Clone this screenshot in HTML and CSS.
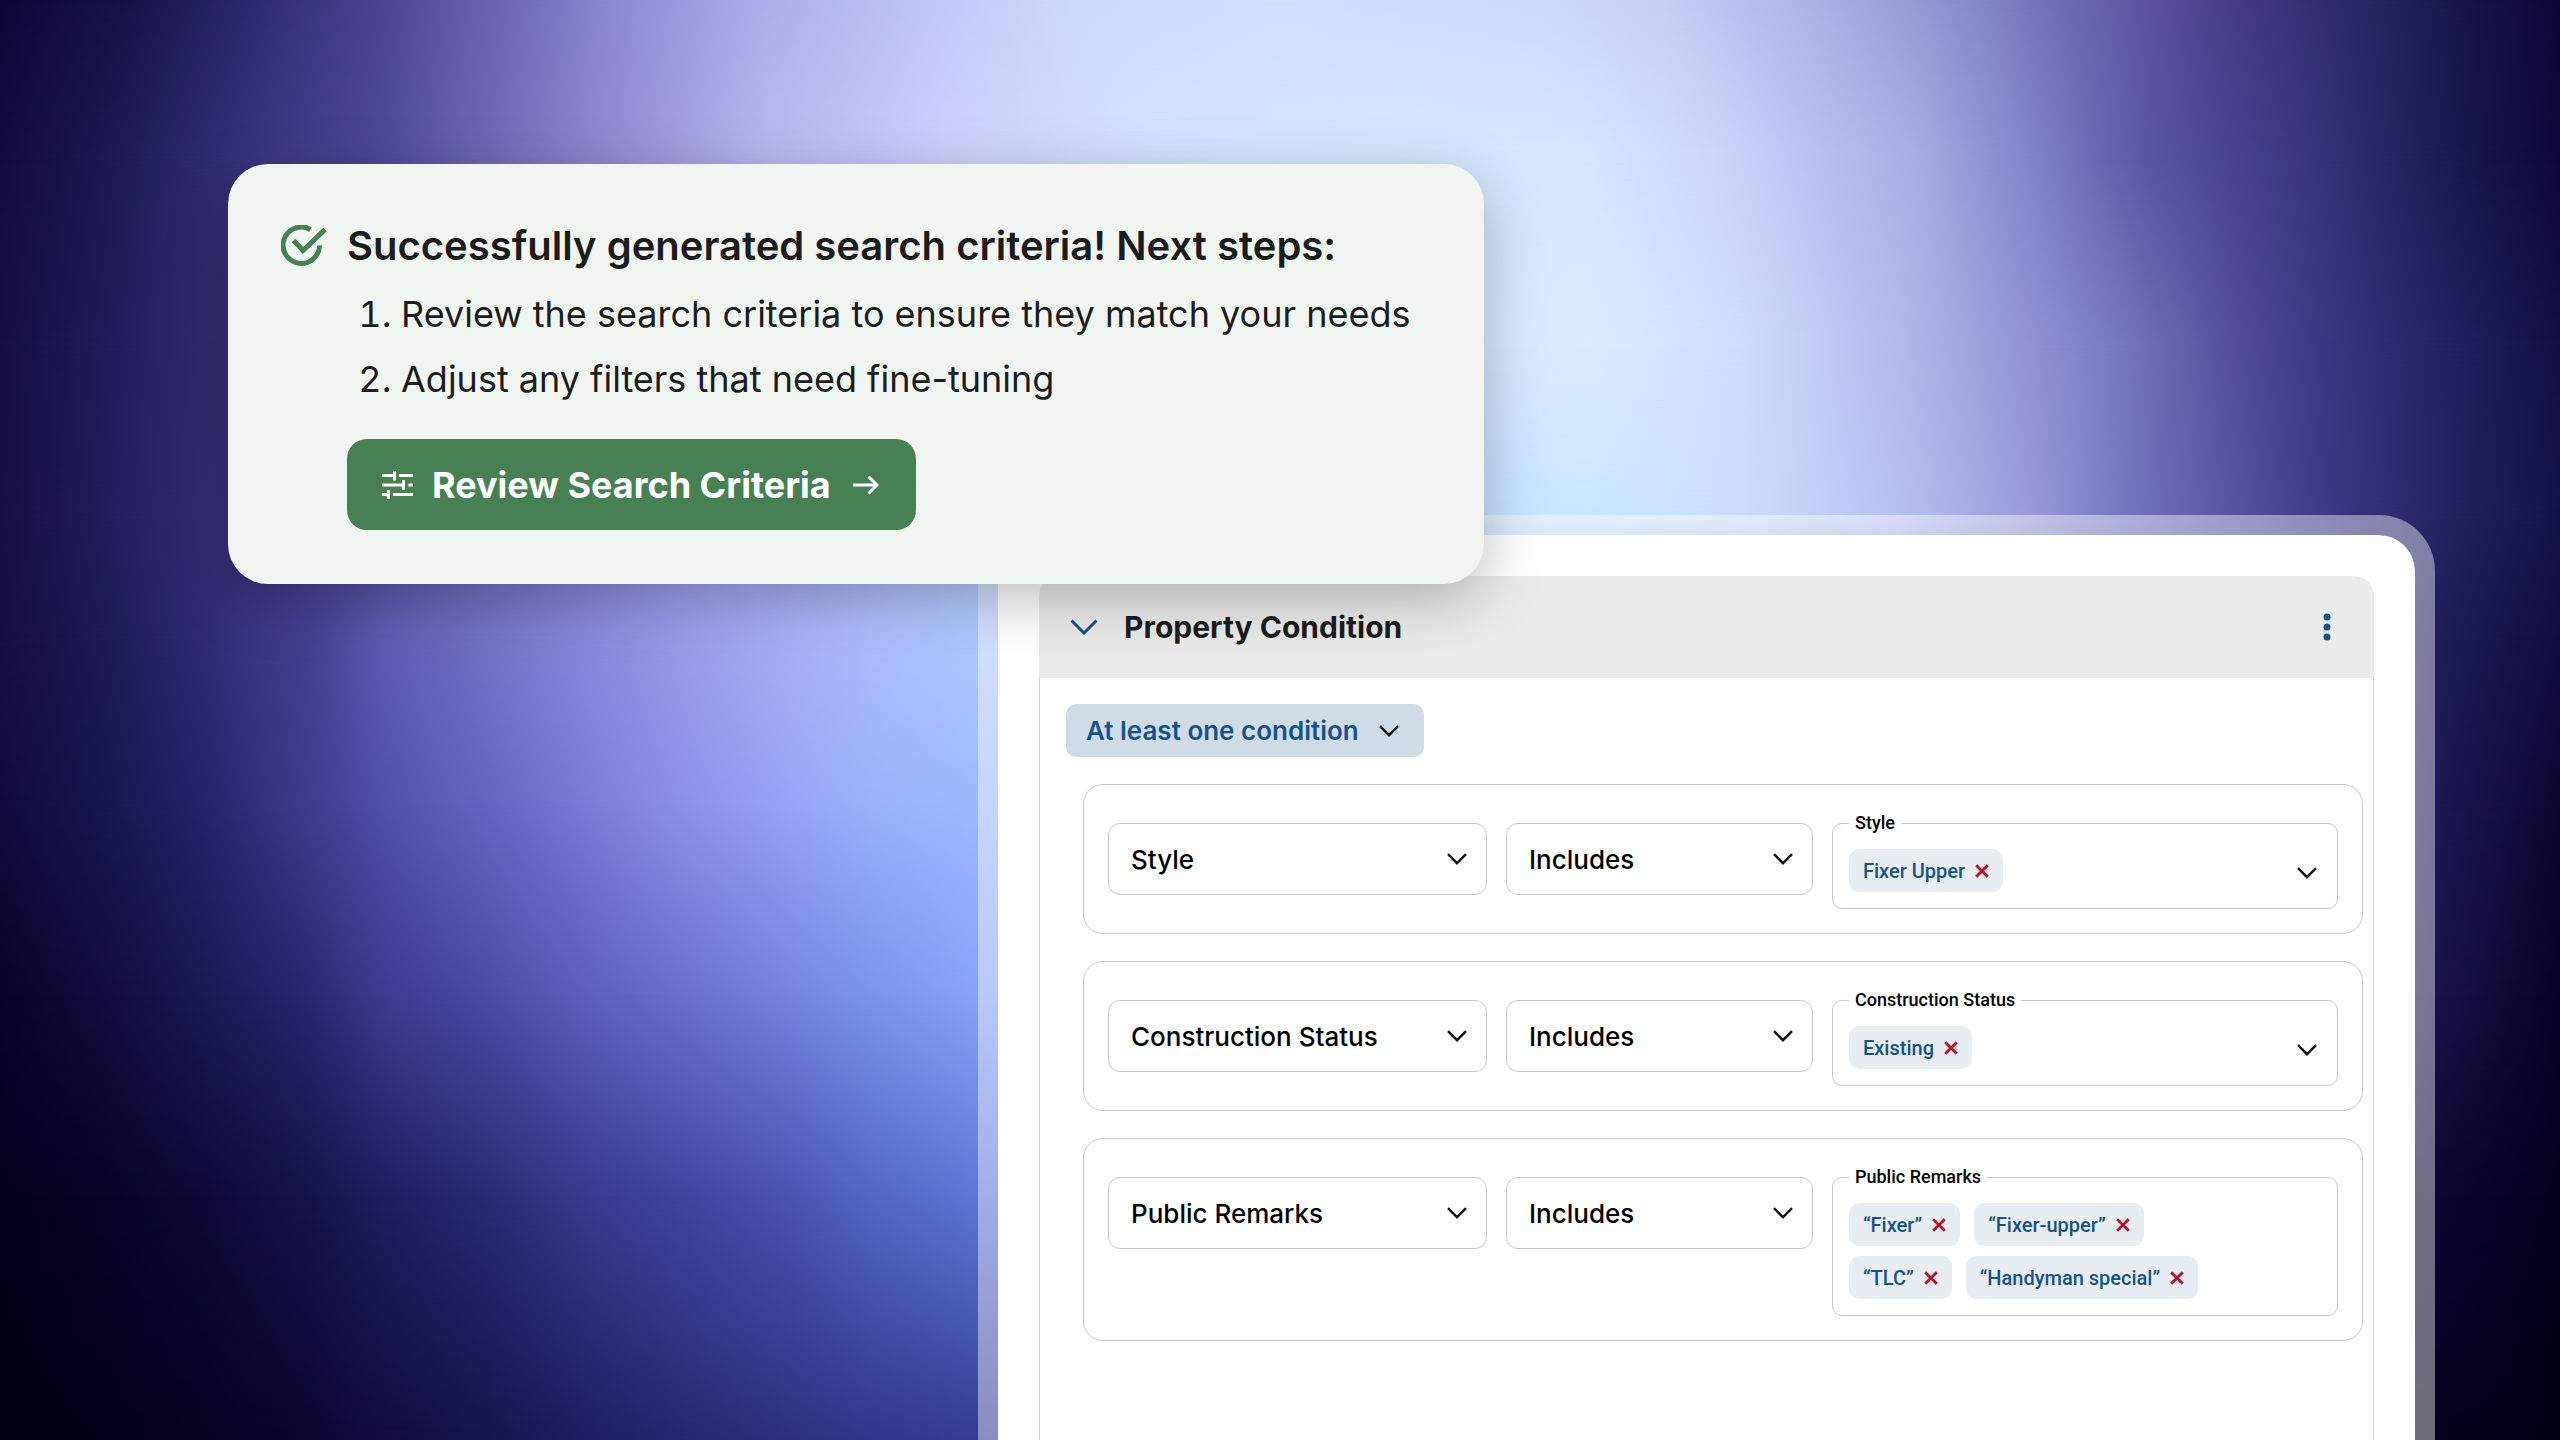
FILE: index.html
```html
<!DOCTYPE html>
<html lang="en">
<head>
<meta charset="utf-8">
<meta name="viewport" content="width=device-width, initial-scale=1">
<title>Search criteria</title>
<link rel="stylesheet" href="styles.css">
</head>
<body>
<svg class="sprite" aria-hidden="true">
  <symbol id="chevron" viewBox="0 0 20 12"><path d="M1 1.2l9 9 9-9" fill="none" stroke="currentColor" stroke-width="2.4"/></symbol>
  <symbol id="cross" viewBox="0 0 14 14"><path d="M1.2 1.2l11.6 11.6M12.8 1.2L1.2 12.8" fill="none" stroke="currentColor" stroke-width="2.8"/></symbol>
</svg>
<div class="backdrop" aria-hidden="true">
  <div class="glow glow-1"></div>
  <div class="glow glow-2"></div>
  <div class="glow glow-3"></div>
  <div class="glow glow-4"></div>
  <div class="glow glow-5"></div>
  <div class="glow glow-6"></div>
  <div class="glow glow-7"></div>
  <div class="glow glow-8"></div>
  <div class="glow glow-9"></div>
</div>
<main class="stage">
  <section class="notice">
    <svg class="notice-icon" viewBox="0 0 46 42" aria-hidden="true" fill="none" stroke="#478153" stroke-width="5">
      <path d="M29.500 4.500A18.200 18.200 0 1 0 38.500 20.500"/>
      <path d="M12.500 15.500L22 25.500L44 4.500"/>
    </svg>
    <div class="notice-body">
      <h1>Successfully generated search criteria! Next steps:</h1>
      <ol>
        <li>Review the search criteria to ensure they match your needs</li>
        <li>Adjust any filters that need fine-tuning</li>
      </ol>
      <button class="review" type="button">
        <svg class="tune" viewBox="0 0 31 28" aria-hidden="true" fill="none" stroke="currentColor" stroke-width="3">
          <path d="M0 4.500H14M17 4.500H31M12.500 0V9.500M0 14H23M26.500 14H31M21.500 9V19M0 23.500H8M11 23.500H31M6.500 19V28"/>
        </svg>
        <span>Review Search Criteria</span>
        <svg class="arrow" viewBox="0 0 26 20" aria-hidden="true" fill="none" stroke="currentColor" stroke-width="3">
          <path d="M0 10H23M15.500 1.500L24 10L15.500 18.500"/>
        </svg>
      </button>
    </div>
  </section>

  <section class="panel">
    <div class="group">
      <header class="group-head">
        <button class="toggle" type="button" aria-label="Collapse"><svg viewBox="0 0 28 16"><path d="M1.500 1.500L14 14L26.500 1.500" fill="none" stroke="currentColor" stroke-width="3"/></svg></button>
        <h2>Property Condition</h2>
        <button class="more" type="button" aria-label="More"><svg viewBox="0 0 8 28" fill="currentColor"><circle cx="4" cy="4" r="3.500"/><circle cx="4" cy="14" r="3.500"/><circle cx="4" cy="24" r="3.500"/></svg></button>
      </header>
      <div class="group-body">
        <button class="mode" type="button">At least one condition <svg class="chev"><use href="#chevron"/></svg></button>
        <div class="rules">
          <div class="rule">
            <div class="pick"><select aria-label="Field"><option>Style</option></select><svg class="chev"><use href="#chevron"/></svg></div>
            <div class="pick"><select aria-label="Operator"><option>Includes</option></select><svg class="chev"><use href="#chevron"/></svg></div>
            <fieldset><legend>Style</legend>
              <div class="tags"><span class="tag">Fixer Upper<button type="button" aria-label="Remove"><svg><use href="#cross"/></svg></button></span></div>
              <svg class="chev"><use href="#chevron"/></svg>
            </fieldset>
          </div>
          <div class="rule">
            <div class="pick"><select aria-label="Field"><option>Construction Status</option></select><svg class="chev"><use href="#chevron"/></svg></div>
            <div class="pick"><select aria-label="Operator"><option>Includes</option></select><svg class="chev"><use href="#chevron"/></svg></div>
            <fieldset><legend>Construction Status</legend>
              <div class="tags"><span class="tag">Existing<button type="button" aria-label="Remove"><svg><use href="#cross"/></svg></button></span></div>
              <svg class="chev"><use href="#chevron"/></svg>
            </fieldset>
          </div>
          <div class="rule">
            <div class="pick"><select aria-label="Field"><option>Public Remarks</option></select><svg class="chev"><use href="#chevron"/></svg></div>
            <div class="pick"><select aria-label="Operator"><option>Includes</option></select><svg class="chev"><use href="#chevron"/></svg></div>
            <fieldset><legend>Public Remarks</legend>
              <div class="tags">
                <span class="tag">“Fixer”<button type="button" aria-label="Remove"><svg><use href="#cross"/></svg></button></span>
                <span class="tag">“Fixer-upper”<button type="button" aria-label="Remove"><svg><use href="#cross"/></svg></button></span>
                <span class="tag">“TLC”<button type="button" aria-label="Remove"><svg><use href="#cross"/></svg></button></span>
                <span class="tag">“Handyman special”<button type="button" aria-label="Remove"><svg><use href="#cross"/></svg></button></span>
              </div>
            </fieldset>
          </div>
        </div>
      </div>
    </div>
  </section>
</main>
</body>
</html>
```

FILE: styles.css
```css
* { box-sizing: border-box; }
html, body { height: 100%; }
body {
  margin: 0;
  overflow: hidden;
  font-family: Inter, "Liberation Sans", sans-serif;
  color: #1c1c1c;
  background: #03021c;
}
button { font: inherit; color: inherit; border: 0; background: none; padding: 0; }
svg { display: block; }
.sprite { position: absolute; width: 0; height: 0; }

/* The glow is a stack of horizontal ramps, each fading in below the one before. */
.backdrop { position: absolute; inset: 0; }
.glow { position: absolute; inset: 0; }
.glow-1 { background: linear-gradient(90deg, #0b0735 0%, #16134a 5%, #2e2a70 10%, #4c4594 15%, #706ab8 20%, #9490d8 25%, #aeaeec 30%, #c4c8f8 37%, #cddafa 42%, #d0dffc 50%, #cddafa 60%, #c6cef5 65%, #b2b6ea 70%, #959ad6 75%, #7370b6 80%, #5a52a0 84%, #3f3880 88%, #2b2868 92%, #18164c 96%, #0b0735 100%); }
.glow-2 { background: linear-gradient(90deg, #100c3f 0%, #1b1852 4%, #2f2b70 8%, #504a9c 15%, #7670bc 20%, #9a94d8 25%, #b8b8f0 30%, #ced0fc 37%, #d4e2fd 45%, #d8e6fe 55%, #d6e6fe 62%, #ccd6fa 67%, #bfc6f4 70%, #a8abe4 75%, #7c7cc4 80%, #5a55a2 84%, #453f8c 88%, #2f2c6e 92%, #191850 96%, #0c0838 100%); mask-image: linear-gradient(transparent 0%, #000 11%); }
.glow-3 { background: linear-gradient(90deg, #130f44 0%, #1f1b5a 4%, #353074 9%, #7670bc 19%, #aaa8ea 27%, #ced8ff 40%, #dcecff 62%, #cfdcfb 68%, #b4bbec 74%, #9494d6 79%, #7676bc 83%, #56509c 87%, #3a3580 91%, #222060 96%, #120f45 100%); mask-image: linear-gradient(transparent 11%, #000 24%); }
.glow-4 { background: linear-gradient(90deg, #140f44 0%, #211d5d 4%, #373179 9%, #6a64b8 17%, #a4a2ee 27%, #b8d0ff 38%, #cae6ff 62%, #ccdcfc 68%, #b8c2f2 74%, #9c9cdc 79%, #7676c0 83%, #5a56a2 87%, #3c3884 91%, #22215e 96%, #14124a 100%); mask-image: linear-gradient(transparent 24%, #000 36%); }
.glow-5 { background: linear-gradient(90deg, #130f42 0%, #1d1a56 4%, #302b74 8%, #453f92 12%, #5f5bb2 15%, #7573c6 19%, #8a88dc 23%, #9c9eec 27%, #a8b0f6 31%, #aebcfc 34%, #b0c8ff 38%, #3c3884 91%, #201e5c 95%, #100d40 100%); mask-image: linear-gradient(transparent 36%, #000 44%); }
.glow-6 { background: linear-gradient(90deg, #0f0b3c 0%, #171550 4%, #26236a 8%, #403a8e 12%, #524fa8 15%, #6664c0 19%, #7c7ad6 23%, #8e92e8 27%, #98a4f6 31%, #9ab0fa 34%, #9cb8ff 38%, #3c3884 90%, #1c1858 95%, #0a0730 100%); mask-image: linear-gradient(transparent 44%, #000 56%); }
.glow-7 { background: linear-gradient(90deg, #070528 0%, #100c3e 4%, #1b1956 8%, #2a2670 12%, #3f3a90 15%, #4c4aa4 19%, #5e60bc 23%, #6a72ce 27%, #7684e0 31%, #7c94ea 34%, #86a4f8 38%, #302b74 90%, #17134c 95%, #060424 100%); mask-image: linear-gradient(transparent 56%, #000 69%); }
.glow-8 { background: linear-gradient(90deg, #02011c 0%, #060524 4%, #0c0938 8%, #15134a 12%, #1f1e60 15%, #2a2a74 19%, #383a8e 23%, #4146a0 27%, #4c54b2 31%, #5466c4 34%, #5e76d4 38%, #17134c 90%, #0a0830 95%, #02011c 100%); mask-image: linear-gradient(transparent 69%, #000 83%); }
.glow-9 { background: linear-gradient(90deg, #000015 0%, #01001a 4%, #05041f 8%, #090630 12%, #100c40 15%, #16144e 19%, #1f1e62 23%, #262872 27%, #2c307e 31%, #303688 34%, #343c90 38%, #05041f 90%, #03021c 95%, #000015 100%); mask-image: linear-gradient(transparent 83%, #000 100%); }

.stage {
  position: relative;
  min-height: 100%;
  display: grid;
  grid-template-columns: 228fr 750fr 506fr 951fr 125fr;
  grid-template-rows: 164px 351px 69px auto;
}

.notice {
  grid-column: 2 / 4;
  grid-row: 2 / 4;
  z-index: 1;
  display: flex;
  gap: 20px;
  padding: 56px 53px 53px;
  border-radius: 40px;
  background: #f1f5f1;
  box-shadow: 0 16px 60px rgba(0, 0, 0, .26);
}
.notice-icon { width: 46px; height: 42px; margin-top: 5px; flex: none; }
.notice h1 { margin: 0; font-size: 40px; line-height: 52px; font-weight: 600; white-space: nowrap; }
.notice ol { margin: 10px 0 27px; padding-left: 54px; font-size: 36px; line-height: 65px; white-space: nowrap; }
.review {
  display: flex;
  align-items: center;
  height: 91px;
  padding: 0 37px 0 35px;
  border-radius: 20px;
  background: #478153;
  color: #fff;
  font-size: 36px;
  font-weight: 700;
}
.tune { width: 31px; height: 28px; margin-right: 19px; }
.arrow { width: 26px; height: 20px; margin-left: 22px; }

.panel {
  grid-column: 3 / 5;
  grid-row: 3 / 5;
  border: 20px solid rgba(255, 255, 255, .42);
  border-bottom: 0;
  border-radius: 56px 56px 0 0;
  background: #fff;
  background-clip: padding-box;
  padding: 41px 41px 0;
  display: flex;
}
.group { flex: 1; display: flex; flex-direction: column; }
.group-head {
  display: flex;
  align-items: center;
  height: 102px;
  padding: 0 43px 0 31px;
  border-radius: 20px 20px 0 0;
  background: #ebebeb;
}
.toggle { color: #175387; margin-right: 26px; }
.toggle svg { width: 28px; height: 16px; }
.more { color: #175387; margin-left: auto; }
.more svg { width: 8px; height: 28px; }
.group h2 { margin: 0; font-size: 30px; line-height: 40px; font-weight: 700; }
.group-body { flex: 1; padding: 26px 10px 0 26px; border: solid #d6d6d6; border-width: 0 1px; background: #fff; }
.mode {
  display: flex;
  align-items: center;
  gap: 20px;
  height: 53px;
  padding: 0 25px 0 20px;
  border-radius: 10px;
  background: #cfdce6;
  color: #175387;
  font-size: 26px;
  font-weight: 600;
}
.chev { width: 20px; height: 12px; flex: none; color: #111; }
.rules { display: grid; gap: 27px; margin: 27px 0 0 17px; }
.rule {
  display: grid;
  grid-template-columns: 379fr 307fr 506fr;
  align-items: start;
  gap: 19px;
  padding: 38px 24px 24px;
  border: 1px solid #c8c8c8;
  border-radius: 20px;
}
.pick { display: grid; align-items: center; }
.pick > * { grid-area: 1 / 1; }
.pick .chev { justify-self: end; margin-right: 20px; pointer-events: none; }
.pick select {
  appearance: none;
  width: 100%;
  height: 72px;
  padding: 0 22px;
  border: 1px solid #c8c8c8;
  border-radius: 12px;
  background: #fff;
  color: #000;
  font: 500 26px Inter, "Liberation Sans", sans-serif;
}
fieldset {
  display: flex;
  align-items: center;
  justify-content: space-between;
  min-width: 0;
  margin: -11px 0 0;
  padding: 15px 20px 16px 16px;
  border: 1px solid #c8c8c8;
  border-radius: 10px;
  font-family: Roboto, "Liberation Sans", sans-serif;
  font-weight: 500;
}
fieldset .chev { margin-top: 4px; }
legend { padding: 0 6px; font-size: 18px; line-height: 22px; color: #000; }
.tags { display: flex; flex-wrap: wrap; gap: 10px 14px; padding-right: 80px; }
.tag {
  display: flex;
  align-items: center;
  gap: 10px;
  height: 43px;
  padding: 0 14px;
  border-radius: 10px;
  background: #e8edf4;
  color: #175387;
  font-size: 20px;
}
.tag button { color: #b5122b; }
.tag svg { width: 14px; height: 14px; }
```
